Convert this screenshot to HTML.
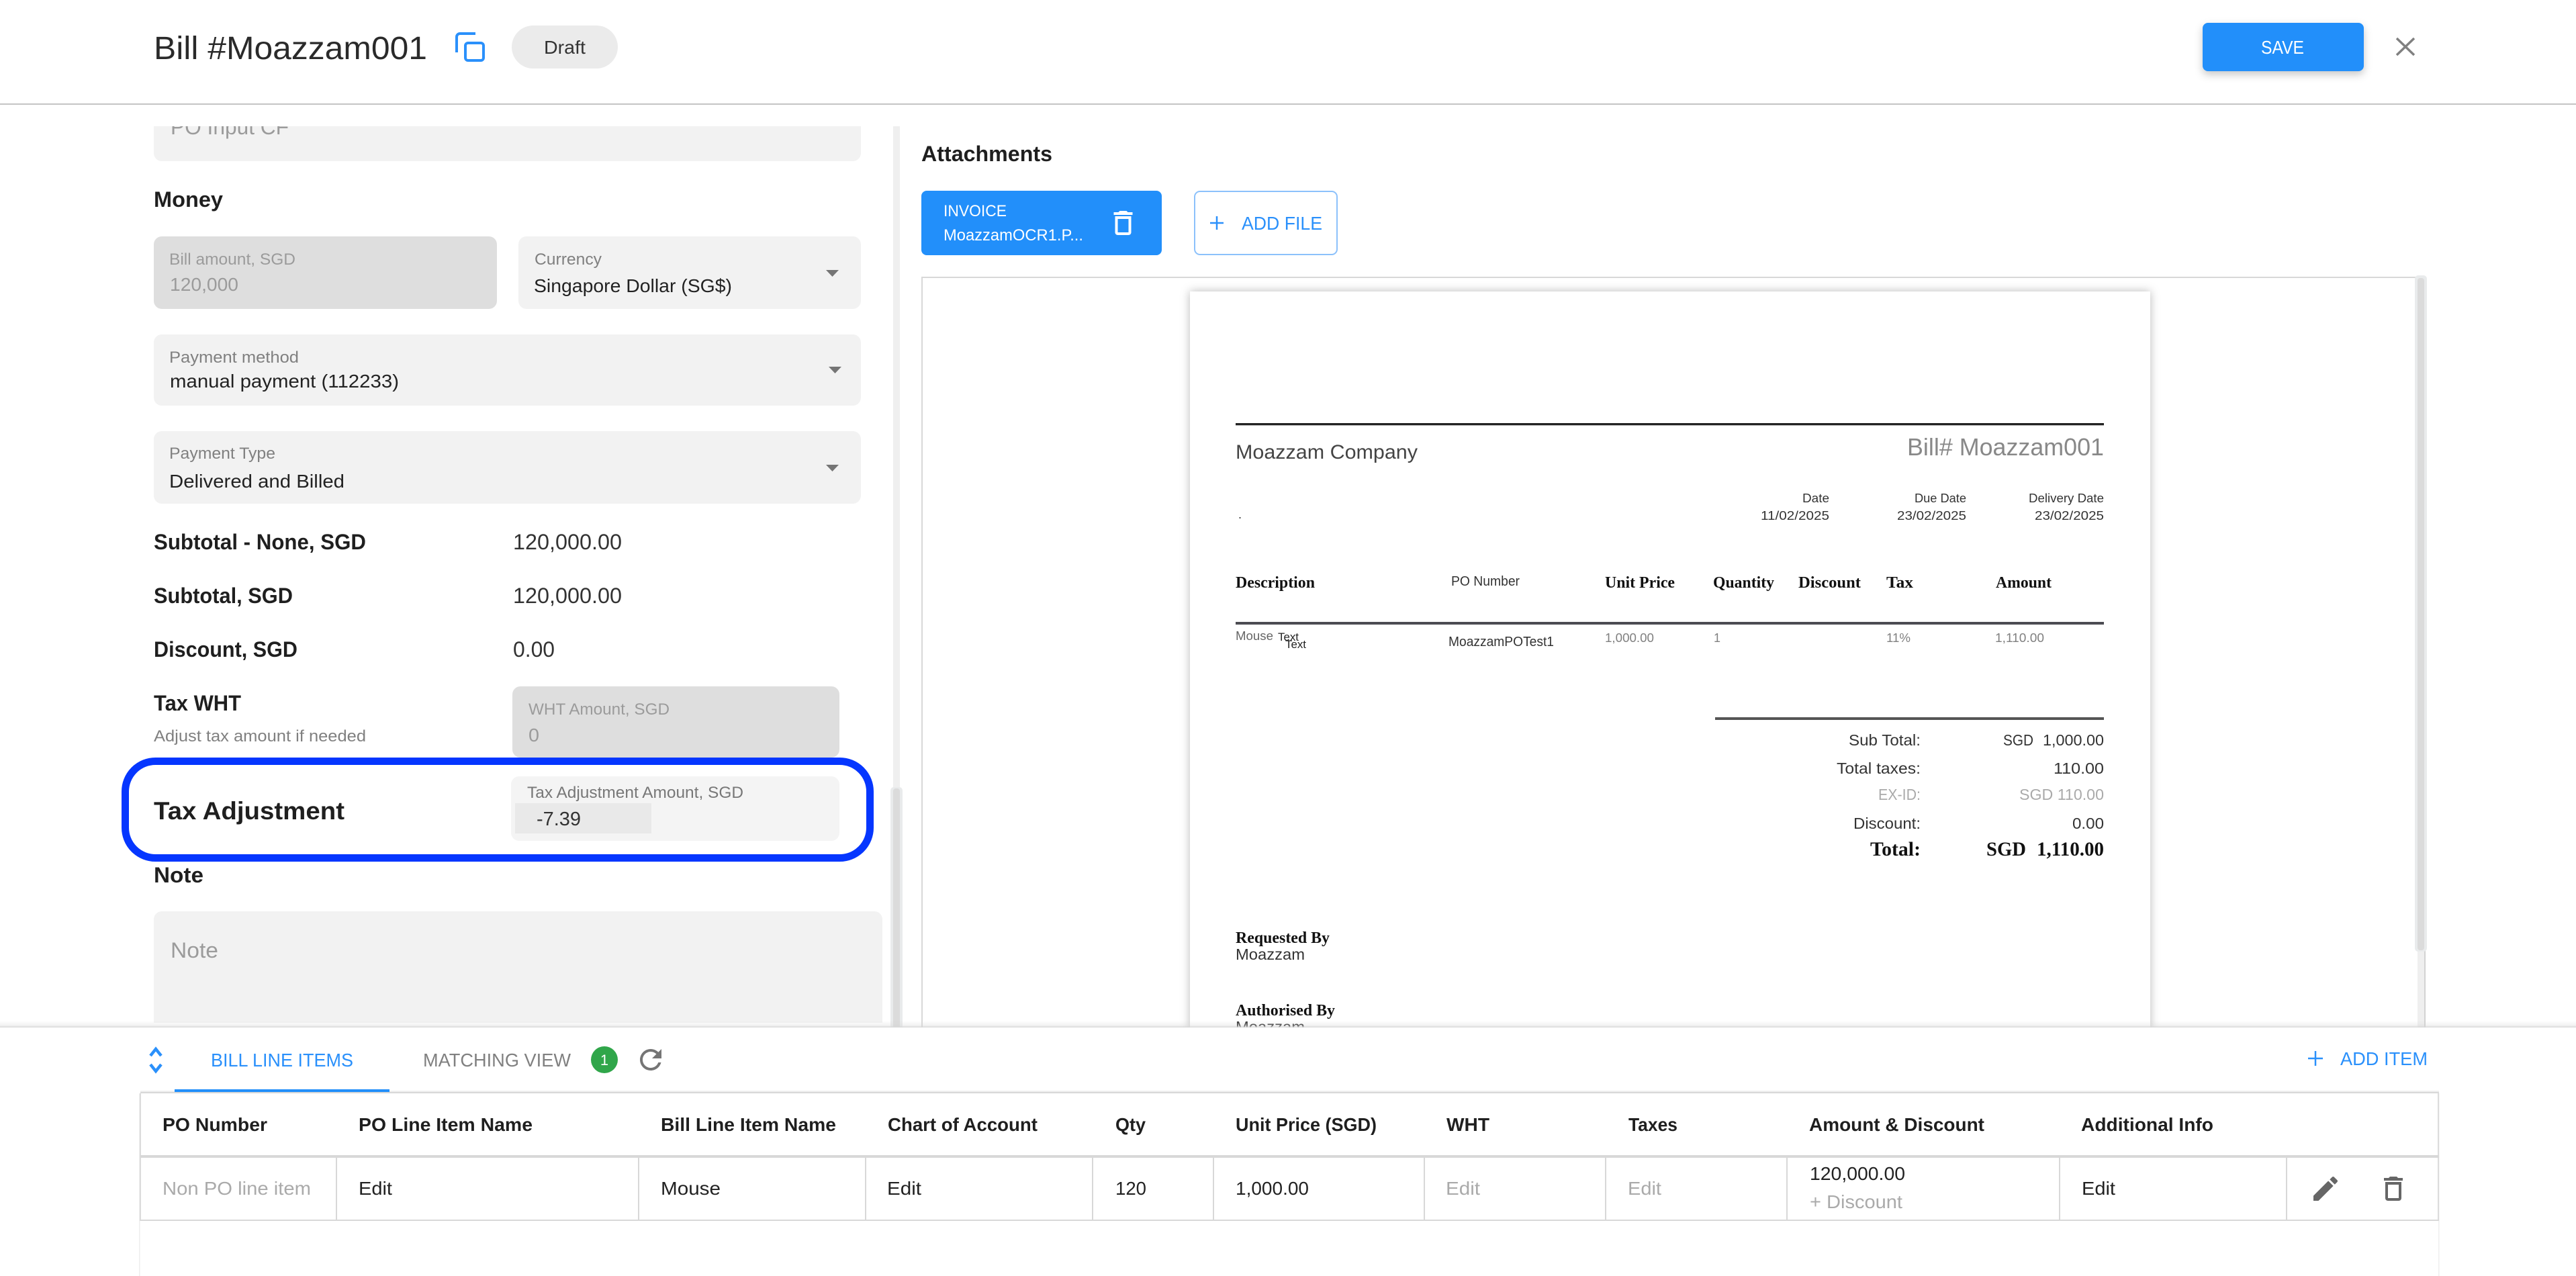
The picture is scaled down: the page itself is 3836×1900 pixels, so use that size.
<!DOCTYPE html>
<html lang="en">
<head>
<meta charset="utf-8">
<title>Bill #Moazzam001</title>
<style>
html,body{margin:0;padding:0;background:#fff;width:3836px;height:1900px;overflow:hidden}
svg{display:block;position:absolute;left:0;top:0}
text{font-family:"Liberation Sans",sans-serif;fill:#333}
.s{font-family:"Liberation Serif",serif;font-weight:700;fill:#111}
.b{font-weight:700;fill:#1f1f1f}
.g{fill:#9b9b9b}
.m{fill:#808080}
.k{fill:#222}
.l{fill:#aaa}
.u{fill:#2a90fb}
.w{fill:#fff}
</style>
</head>
<body>
<svg width="3836" height="1900" viewBox="0 0 3836 1900" xmlns="http://www.w3.org/2000/svg">
<defs>
<filter id="sb" x="-10%" y="-30%" width="120%" height="170%"><feDropShadow dx="0" dy="5" stdDeviation="6" flood-color="#000" flood-opacity=".22"/></filter>
<filter id="sp" x="-5%" y="-5%" width="110%" height="110%"><feDropShadow dx="0" dy="0" stdDeviation="7" flood-color="#000" flood-opacity=".28"/></filter>
<linearGradient id="sh" x1="0" y1="0" x2="0" y2="1"><stop offset="0" stop-color="#d4d4d4" stop-opacity="0"/><stop offset=".7" stop-color="#d4d4d4" stop-opacity=".3"/><stop offset="1" stop-color="#d8d8d8" stop-opacity="1"/></linearGradient>
<clipPath id="c1"><rect x="229" y="188" width="400" height="52"/></clipPath>
</defs>
<rect width="3836" height="1900" fill="#fff"/>

<!-- LEFT PANEL -->
<path d="M229 188H1282V228a12 12 0 0 1-12 12H241a12 12 0 0 1-12-12Z" fill="#f2f2f2"/>
<text x="254" y="200" font-size="32" class="g" textLength="176" lengthAdjust="spacingAndGlyphs" clip-path="url(#c1)">PO Input CF</text>

<text x="229" y="308" font-size="32" class="b" textLength="103" lengthAdjust="spacingAndGlyphs">Money</text>

<rect x="229" y="352" width="511" height="108" rx="12" fill="#dedede"/>
<text x="252" y="394" font-size="24" class="g" textLength="188" lengthAdjust="spacingAndGlyphs">Bill amount, SGD</text>
<text x="253" y="433" font-size="28" class="g" textLength="102" lengthAdjust="spacingAndGlyphs">120,000</text>

<rect x="772" y="352" width="510" height="108" rx="12" fill="#f2f2f2"/>
<text x="796" y="394" font-size="24" class="m" textLength="100" lengthAdjust="spacingAndGlyphs">Currency</text>
<text x="795" y="435" font-size="28" class="k" textLength="295" lengthAdjust="spacingAndGlyphs">Singapore Dollar (SG$)</text>
<path d="M1230 402h19l-9.500 10z" fill="#757575"/>

<rect x="229" y="498" width="1053" height="106" rx="12" fill="#f2f2f2"/>
<text x="252" y="540" font-size="24" class="m" textLength="193" lengthAdjust="spacingAndGlyphs">Payment method</text>
<text x="253" y="577" font-size="28" class="k" textLength="341" lengthAdjust="spacingAndGlyphs">manual payment (112233)</text>
<path d="M1234 546h19l-9.500 10z" fill="#757575"/>

<rect x="229" y="642" width="1053" height="108" rx="12" fill="#f2f2f2"/>
<text x="252" y="683" font-size="24" class="m" textLength="158" lengthAdjust="spacingAndGlyphs">Payment Type</text>
<text x="252" y="726" font-size="28" class="k" textLength="261" lengthAdjust="spacingAndGlyphs">Delivered and Billed</text>
<path d="M1230 692h19l-9.500 10z" fill="#757575"/>

<text x="229" y="818" font-size="32" class="b" textLength="316" lengthAdjust="spacingAndGlyphs">Subtotal - None, SGD</text>
<text x="764" y="818" font-size="32" textLength="162" lengthAdjust="spacingAndGlyphs">120,000.00</text>
<text x="229" y="898" font-size="32" class="b" textLength="207" lengthAdjust="spacingAndGlyphs">Subtotal, SGD</text>
<text x="764" y="898" font-size="32" textLength="162" lengthAdjust="spacingAndGlyphs">120,000.00</text>
<text x="229" y="978" font-size="32" class="b" textLength="214" lengthAdjust="spacingAndGlyphs">Discount, SGD</text>
<text x="764" y="978" font-size="32" textLength="62" lengthAdjust="spacingAndGlyphs">0.00</text>

<text x="229" y="1058" font-size="32" class="b" textLength="130" lengthAdjust="spacingAndGlyphs">Tax WHT</text>
<text x="229" y="1104" font-size="24" class="m" textLength="316" lengthAdjust="spacingAndGlyphs">Adjust tax amount if needed</text>
<rect x="763" y="1022" width="487" height="106" rx="12" fill="#dedede"/>
<text x="787" y="1064" font-size="24" class="g" textLength="210" lengthAdjust="spacingAndGlyphs">WHT Amount, SGD</text>
<text x="787" y="1104" font-size="28" class="g" textLength="16" lengthAdjust="spacingAndGlyphs">0</text>

<rect x="186.500" y="1133.500" width="1109" height="144" rx="45" fill="#fff" stroke="#0536ff" stroke-width="11"/>
<text x="229" y="1220" font-size="37" class="b" textLength="284" lengthAdjust="spacingAndGlyphs">Tax Adjustment</text>
<rect x="761" y="1156" width="489" height="96" rx="12" fill="#f4f4f4"/>
<text x="785" y="1188" font-size="24" style="fill:#777" textLength="322" lengthAdjust="spacingAndGlyphs">Tax Adjustment Amount, SGD</text>
<rect x="767" y="1196" width="203" height="45" fill="#e9e9e9"/>
<text x="799" y="1229" font-size="29" textLength="66" lengthAdjust="spacingAndGlyphs">-7.39</text>

<text x="229" y="1314" font-size="32" class="b" textLength="74" lengthAdjust="spacingAndGlyphs">Note</text>
<path d="M241 1357H1302a12 12 0 0 1 12 12V1523H229V1369a12 12 0 0 1 12-12Z" fill="#f2f2f2"/>
<text x="254" y="1426" font-size="32" class="g" textLength="71" lengthAdjust="spacingAndGlyphs">Note</text>

<!-- left scrollbar -->
<rect x="1330" y="188" width="10" height="990" fill="#efefef"/>
<rect x="1326" y="1172" width="18" height="360" rx="5" fill="#e9ebec"/>
<rect x="1330" y="1174" width="10" height="360" rx="4" fill="#dbdbdb"/>

<!-- RIGHT PANEL -->
<text x="1372" y="240" font-size="32" class="b" textLength="195" lengthAdjust="spacingAndGlyphs">Attachments</text>

<rect x="1372" y="284" width="358" height="96" rx="8" fill="#228ffa"/>
<text x="1405" y="322" font-size="24" class="w" textLength="94" lengthAdjust="spacingAndGlyphs">INVOICE</text>
<text x="1405" y="358" font-size="24" class="w" textLength="208" lengthAdjust="spacingAndGlyphs">MoazzamOCR1.P...</text>
<svg x="1648.500" y="308" width="48" height="48" viewBox="0 0 24 24"><path d="M6 19c0 1.100.900 2 2 2h8c1.100 0 2-.900 2-2V7H6v12zM8 9h8v10H8V9zm7.500-5l-1-1h-5l-1 1H5v2h14V4z" fill="#fff"/></svg>

<rect x="1779" y="285" width="212" height="94" rx="8" fill="#fff" stroke="#8cc1fb" stroke-width="2"/>
<path d="M1812 322v20M1802 332h20" stroke="#2a90fb" stroke-width="2.500" fill="none"/>
<text x="1849" y="342" font-size="28" class="u" textLength="120" lengthAdjust="spacingAndGlyphs">ADD FILE</text>

<!-- preview frame -->
<rect x="1373" y="413" width="2238" height="1130" fill="#fff" stroke="#d8d8d8" stroke-width="2"/>
<!-- doc page -->
<rect x="1772" y="434" width="1430" height="1120" fill="#fff" filter="url(#sp)"/>
<rect x="1840" y="630" width="1293" height="3" fill="#222"/>
<rect x="1840" y="633" width="1293" height="1" fill="#bbb"/>
<text x="1840" y="683" font-size="30" style="fill:#444" textLength="271" lengthAdjust="spacingAndGlyphs">Moazzam Company</text>
<text x="2840" y="678" font-size="36" style="fill:#888" textLength="293" lengthAdjust="spacingAndGlyphs">Bill# Moazzam001</text>

<text x="2684" y="748" font-size="18" textLength="40" lengthAdjust="spacingAndGlyphs">Date</text>
<text x="2851" y="748" font-size="18" textLength="77" lengthAdjust="spacingAndGlyphs">Due Date</text>
<text x="3021" y="748" font-size="18" textLength="112" lengthAdjust="spacingAndGlyphs">Delivery Date</text>
<text x="2622" y="774" font-size="18" textLength="102" lengthAdjust="spacingAndGlyphs">11/02/2025</text>
<text x="2825" y="774" font-size="18" textLength="103" lengthAdjust="spacingAndGlyphs">23/02/2025</text>
<text x="3030" y="774" font-size="18" textLength="103" lengthAdjust="spacingAndGlyphs">23/02/2025</text>
<text x="1844" y="772" font-size="18" style="fill:#333">.</text>

<text x="1840" y="875" font-size="24" class="s" textLength="118" lengthAdjust="spacingAndGlyphs">Description</text>
<text x="2161" y="872" font-size="20" textLength="102" lengthAdjust="spacingAndGlyphs">PO Number</text>
<text x="2390" y="875" font-size="24" class="s" textLength="104" lengthAdjust="spacingAndGlyphs">Unit Price</text>
<text x="2551" y="875" font-size="24" class="s" textLength="91" lengthAdjust="spacingAndGlyphs">Quantity</text>
<text x="2678" y="875" font-size="24" class="s" textLength="93" lengthAdjust="spacingAndGlyphs">Discount</text>
<text x="2809" y="875" font-size="24" class="s" textLength="40" lengthAdjust="spacingAndGlyphs">Tax</text>
<text x="2972" y="875" font-size="24" class="s" textLength="83" lengthAdjust="spacingAndGlyphs">Amount</text>

<rect x="1840" y="926" width="1293" height="4" fill="#4c4c52"/>
<text x="1840" y="953" font-size="18" style="fill:#666" textLength="56" lengthAdjust="spacingAndGlyphs">Mouse</text>
<text x="1903" y="954" font-size="17" class="k" textLength="31" lengthAdjust="spacingAndGlyphs">Text</text>
<text x="1914" y="965" font-size="17" class="k" textLength="31" lengthAdjust="spacingAndGlyphs">Text</text>
<text x="2157" y="962" font-size="20" textLength="157" lengthAdjust="spacingAndGlyphs">MoazzamPOTest1</text>
<text x="2390" y="956" font-size="18" class="m" textLength="73" lengthAdjust="spacingAndGlyphs">1,000.00</text>
<text x="2552" y="956" font-size="18" class="m">1</text>
<text x="2809" y="956" font-size="18" class="m" textLength="36" lengthAdjust="spacingAndGlyphs">11%</text>
<text x="2971" y="956" font-size="18" class="m" textLength="73" lengthAdjust="spacingAndGlyphs">1,110.00</text>

<rect x="2554" y="1068" width="579" height="4" fill="#555"/>
<text x="2753" y="1110" font-size="23" textLength="107" lengthAdjust="spacingAndGlyphs">Sub Total:</text>
<text x="2983" y="1110" font-size="23" textLength="45" lengthAdjust="spacingAndGlyphs">SGD</text>
<text x="3042" y="1110" font-size="23" textLength="91" lengthAdjust="spacingAndGlyphs">1,000.00</text>
<text x="2735" y="1152" font-size="23" textLength="125" lengthAdjust="spacingAndGlyphs">Total taxes:</text>
<text x="3058" y="1152" font-size="23" textLength="75" lengthAdjust="spacingAndGlyphs">110.00</text>
<text x="2797" y="1191" font-size="23" class="l" textLength="63" lengthAdjust="spacingAndGlyphs">EX-ID:</text>
<text x="3007" y="1191" font-size="23" class="l" textLength="126" lengthAdjust="spacingAndGlyphs">SGD 110.00</text>
<text x="2760" y="1234" font-size="23" textLength="100" lengthAdjust="spacingAndGlyphs">Discount:</text>
<text x="3086" y="1234" font-size="23" textLength="47" lengthAdjust="spacingAndGlyphs">0.00</text>
<text x="2785" y="1274" font-size="30" class="s" textLength="75" lengthAdjust="spacingAndGlyphs">Total:</text>
<text x="2958" y="1274" font-size="30" class="s" textLength="59" lengthAdjust="spacingAndGlyphs">SGD</text>
<text x="3033" y="1274" font-size="30" class="s" textLength="100" lengthAdjust="spacingAndGlyphs">1,110.00</text>

<text x="1840" y="1404" font-size="24" class="s" textLength="140" lengthAdjust="spacingAndGlyphs">Requested By</text>
<text x="1840" y="1429" font-size="23" textLength="103" lengthAdjust="spacingAndGlyphs">Moazzam</text>
<text x="1840" y="1512" font-size="24" class="s" textLength="148" lengthAdjust="spacingAndGlyphs">Authorised By</text>
<text x="1840" y="1537" font-size="23" textLength="103" lengthAdjust="spacingAndGlyphs">Moazzam</text>

<!-- right scrollbar -->
<rect x="3600" y="1400" width="10" height="130" fill="#efefef"/>
<rect x="3610" y="1410" width="2" height="120" fill="#d2d2d2"/>
<rect x="3612" y="414" width="4" height="1116" fill="#fff"/>
<rect x="3596" y="410" width="18" height="1007" rx="5" fill="#e9ebec"/>
<rect x="3600" y="414" width="10" height="1001" rx="4" fill="#dbdbdb"/>

<!-- BOTTOM PANEL -->
<rect x="0" y="1530" width="3836" height="370" fill="#fff"/>
<rect x="0" y="1520" width="3836" height="10" fill="url(#sh)"/>

<path d="M224 1572l8-10 8 10" fill="none" stroke="#2a90fb" stroke-width="4.500"/>
<path d="M224 1585l8 10 8-10" fill="none" stroke="#2a90fb" stroke-width="4.500"/>
<text x="314" y="1588" font-size="28" class="u" textLength="212" lengthAdjust="spacingAndGlyphs">BILL LINE ITEMS</text>
<text x="630" y="1588" font-size="28" class="m" textLength="220" lengthAdjust="spacingAndGlyphs">MATCHING VIEW</text>
<circle cx="900" cy="1578" r="20" fill="#30a64a"/>
<text x="900" y="1586" font-size="22" class="w" text-anchor="middle">1</text>
<svg x="945" y="1554" width="48" height="48" viewBox="0 0 24 24"><path d="M17.650 6.350C16.200 4.900 14.210 4 12 4c-4.420 0-7.990 3.580-7.990 8s3.570 8 7.990 8c3.730 0 6.840-2.550 7.730-6h-2.080c-.82 2.330-3.040 4-5.650 4-3.310 0-6-2.690-6-6s2.690-6 6-6c1.660 0 3.140.69 4.220 1.780L13 11h7V4l-2.350 2.350z" fill="#757575"/></svg>

<path d="M3448 1565v22M3437 1576h22" stroke="#2a90fb" stroke-width="2.500" fill="none"/>
<text x="3485" y="1586" font-size="28" class="u" textLength="130" lengthAdjust="spacingAndGlyphs">ADD ITEM</text>

<!-- table -->
<rect x="207" y="1628" width="1.500" height="272" fill="#eee"/>
<rect x="3631" y="1628" width="1.500" height="272" fill="#eee"/>
<rect x="209" y="1624" width="3423" height="2" fill="#efefef"/>
<rect x="209" y="1626" width="3423" height="2" fill="#d8d8d8"/>
<rect x="208" y="1628" width="2" height="190" fill="#dcdcdc"/>
<rect x="3630" y="1628" width="2" height="190" fill="#dcdcdc"/>
<rect x="260" y="1622" width="320" height="4" fill="#228ffa"/>
<rect x="209" y="1720" width="3423" height="4" fill="#d8d8d8"/>
<rect x="209" y="1816" width="3423" height="2" fill="#d8d8d8"/>
<g fill="#d8d8d8">
<rect x="500" y="1724" width="2" height="92"/>
<rect x="950" y="1724" width="2" height="92"/>
<rect x="1288" y="1724" width="2" height="92"/>
<rect x="1626" y="1724" width="2" height="92"/>
<rect x="1806" y="1724" width="2" height="92"/>
<rect x="2120" y="1724" width="2" height="92"/>
<rect x="2390" y="1724" width="2" height="92"/>
<rect x="2660" y="1724" width="2" height="92"/>
<rect x="3066" y="1724" width="2" height="92"/>
<rect x="3404" y="1724" width="2" height="92"/>
</g>

<text x="242" y="1684" font-size="28" class="b" textLength="156" lengthAdjust="spacingAndGlyphs">PO Number</text>
<text x="534" y="1684" font-size="28" class="b" textLength="259" lengthAdjust="spacingAndGlyphs">PO Line Item Name</text>
<text x="984" y="1684" font-size="28" class="b" textLength="261" lengthAdjust="spacingAndGlyphs">Bill Line Item Name</text>
<text x="1322" y="1684" font-size="28" class="b" textLength="223" lengthAdjust="spacingAndGlyphs">Chart of Account</text>
<text x="1661" y="1684" font-size="28" class="b" textLength="45" lengthAdjust="spacingAndGlyphs">Qty</text>
<text x="1840" y="1684" font-size="28" class="b" textLength="210" lengthAdjust="spacingAndGlyphs">Unit Price (SGD)</text>
<text x="2154" y="1684" font-size="28" class="b" textLength="64" lengthAdjust="spacingAndGlyphs">WHT</text>
<text x="2425" y="1684" font-size="28" class="b" textLength="73" lengthAdjust="spacingAndGlyphs">Taxes</text>
<text x="2694" y="1684" font-size="28" class="b" textLength="261" lengthAdjust="spacingAndGlyphs">Amount &amp; Discount</text>
<text x="3099" y="1684" font-size="28" class="b" textLength="197" lengthAdjust="spacingAndGlyphs">Additional Info</text>

<text x="242" y="1779" font-size="28" class="l" textLength="221" lengthAdjust="spacingAndGlyphs">Non PO line item</text>
<text x="534" y="1779" font-size="28" class="k" textLength="50" lengthAdjust="spacingAndGlyphs">Edit</text>
<text x="984" y="1779" font-size="28" class="k" textLength="89" lengthAdjust="spacingAndGlyphs">Mouse</text>
<text x="1321" y="1779" font-size="28" class="k" textLength="51" lengthAdjust="spacingAndGlyphs">Edit</text>
<text x="1661" y="1779" font-size="28" class="k" textLength="46" lengthAdjust="spacingAndGlyphs">120</text>
<text x="1840" y="1779" font-size="28" class="k" textLength="109" lengthAdjust="spacingAndGlyphs">1,000.00</text>
<text x="2153" y="1779" font-size="28" class="l" textLength="51" lengthAdjust="spacingAndGlyphs">Edit</text>
<text x="2424" y="1779" font-size="28" class="l" textLength="50" lengthAdjust="spacingAndGlyphs">Edit</text>
<text x="2695" y="1757" font-size="28" class="k" textLength="142" lengthAdjust="spacingAndGlyphs">120,000.00</text>
<text x="2695" y="1799" font-size="28" class="l" textLength="138" lengthAdjust="spacingAndGlyphs">+ Discount</text>
<text x="3100" y="1779" font-size="28" class="k" textLength="50" lengthAdjust="spacingAndGlyphs">Edit</text>

<svg x="3439" y="1746" width="48" height="48" viewBox="0 0 24 24"><path d="M3 17.250V21h3.750L17.810 9.940l-3.750-3.750L3 17.250zM20.710 7.040c.39-.39.39-1.020 0-1.410l-2.340-2.340c-.39-.39-1.020-.39-1.410 0l-1.830 1.830 3.750 3.750 1.830-1.830z" fill="#666"/></svg>
<svg x="3540" y="1746" width="48" height="48" viewBox="0 0 24 24"><path d="M6 19c0 1.100.900 2 2 2h8c1.100 0 2-.900 2-2V7H6v12zM8 9h8v10H8V9zm7.500-5l-1-1h-5l-1 1H5v2h14V4z" fill="#666"/></svg>

<!-- HEADER -->
<rect x="0" y="0" width="3836" height="154" fill="#fff"/>
<rect x="0" y="154" width="3836" height="2" fill="#c4c4c4"/>
<text x="229" y="88" font-size="48" textLength="407" lengthAdjust="spacingAndGlyphs" style="fill:#2a2a2a">Bill #Moazzam001</text>
<path d="M708 50H685a5 5 0 0 0-5 5V78" fill="none" stroke="#2a90fb" stroke-width="4"/>
<rect x="693" y="64" width="27" height="26" rx="4" fill="none" stroke="#2a90fb" stroke-width="4"/>
<rect x="762" y="38" width="158" height="64" rx="32" fill="#ebebeb"/>
<text x="810" y="80" font-size="28" textLength="62" lengthAdjust="spacingAndGlyphs">Draft</text>
<rect x="3280" y="34" width="240" height="72" rx="8" fill="#228ffa" filter="url(#sb)"/>
<text x="3367" y="80" font-size="28" class="w" textLength="64" lengthAdjust="spacingAndGlyphs">SAVE</text>
<path d="M3569 57l26 25M3595 57l-26 25" stroke="#808080" stroke-width="3.500" fill="none"/>
</svg>
</body>
</html>
